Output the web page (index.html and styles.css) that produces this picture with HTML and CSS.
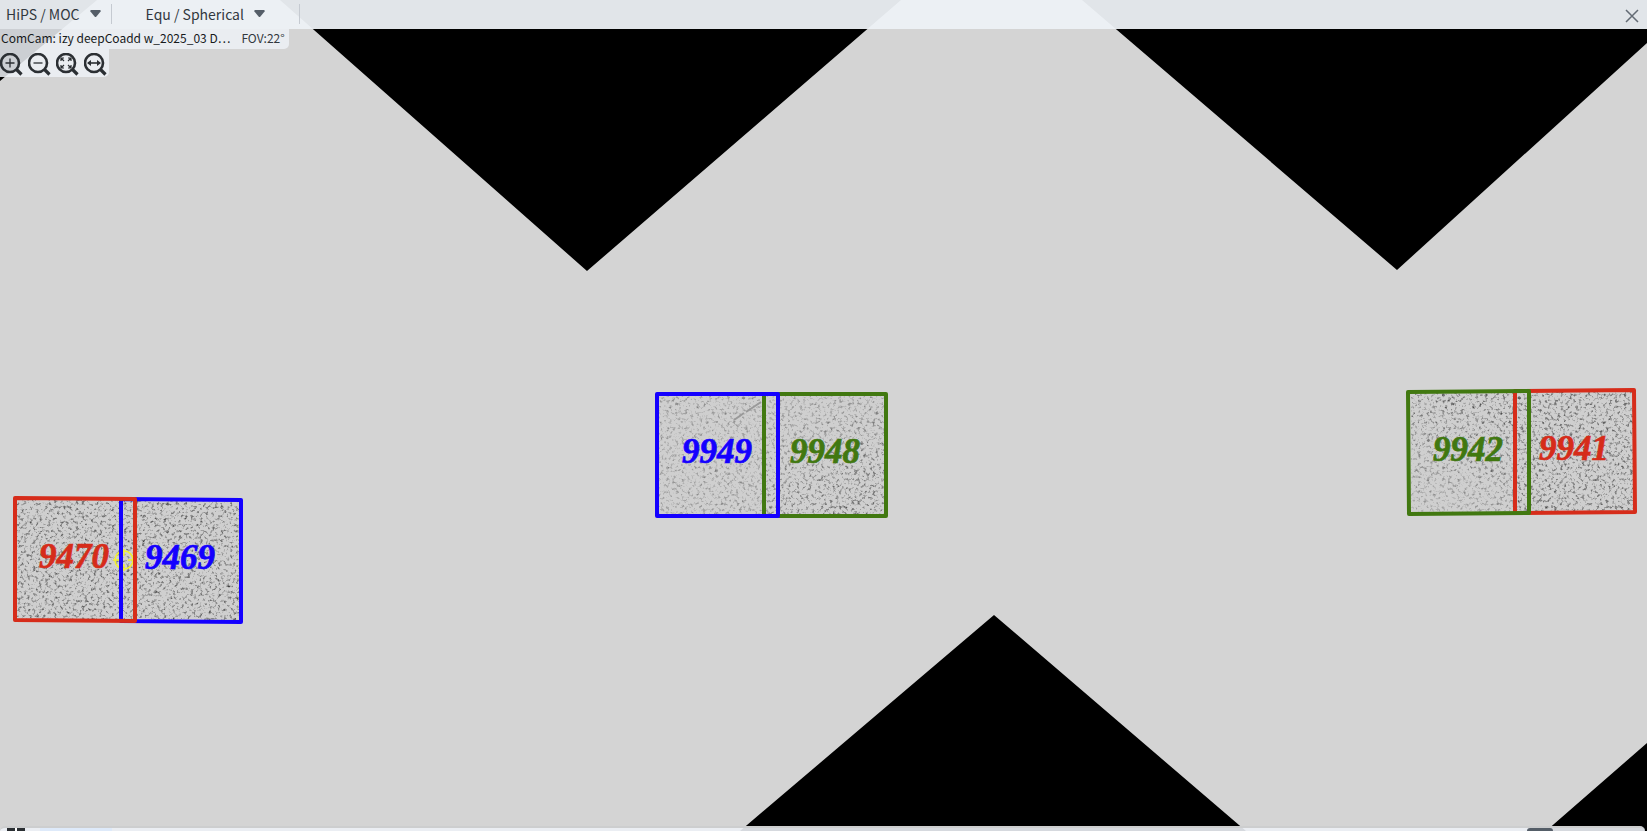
FILE: index.html
```html
<!DOCTYPE html>
<html lang="en">
<head>
<meta charset="utf-8">
<title>HiPS Viewer</title>
<link rel="stylesheet" href="styles.css">
</head>
<body>
<main class="viewer">
  <svg class="sky" viewBox="0 0 1647 831" preserveAspectRatio="xMidYMid slice" role="img" aria-label="Sky map with tracts">
    <defs>
      <filter id="grain" x="0" y="0" width="100%" height="100%" color-interpolation-filters="sRGB">
        <feTurbulence type="fractalNoise" baseFrequency="0.33" numOctaves="3" seed="7"/>
        <feColorMatrix values="0 0 0 0 0.25  0 0 0 0 0.25  0 0 0 0 0.25  2.6 0 0 0 -1.35"/>
        <feGaussianBlur stdDeviation="0.4"/>
      </filter>
      <linearGradient id="fadeDown" x1="0" y1="0" x2="0.5" y2="1"><stop offset="0" stop-color="#666"/><stop offset="1" stop-color="#fff"/></linearGradient>
      <linearGradient id="fadeUp" x1="0.5" y1="0" x2="0.2" y2="1"><stop offset="0" stop-color="#fff"/><stop offset="1" stop-color="#777"/></linearGradient>
      <mask id="maskDown"><rect x="764" y="394" width="122" height="122" fill="url(#fadeDown)"/></mask>
      <mask id="maskUp"><rect x="1409" y="391" width="110" height="122" fill="url(#fadeUp)"/></mask>
    </defs>
    <rect class="sky-base" width="1647" height="831"/>
    <path class="void" d="M0 0H97L0 81ZM280 0H901L587 271ZM1082 0H1647V43L1397 270ZM740 831L994 615L1246 831ZM1546 831L1647 743V831Z"/>

    <g class="tiles">
      <rect x="16" y="499" width="225" height="122"/>
      <rect x="657" y="394" width="229" height="122"/>
      <rect x="1410" y="391" width="225" height="122"/>
    </g>
    <g class="grain">
      <rect x="17" y="500" width="223" height="120"/>
      <rect class="grain-faint" x="658" y="395" width="108" height="120"/>
      <g mask="url(#maskDown)"><rect x="766" y="395" width="119" height="120"/></g>
      <g mask="url(#maskUp)"><rect x="1411" y="392" width="107" height="120"/></g>
      <rect x="1518" y="392" width="116" height="120"/>
    </g>
    <path class="streak" d="M746 412L761 402M734 420L744 413"/>

    <g class="target"><circle cx="124" cy="560" r="9"/><path d="M124 549V556M124 564V571M113 560H120M128 560H134"/></g>

    <g class="tract">
      <path class="blue" d="M121 499L241 500V622L121 621Z"/>
      <path class="red" d="M15 498L135 499V621L15 620Z"/>
      <path class="green" d="M764 394H886V516H764Z"/>
      <path class="blue" d="M657 394H778V516H657Z"/>
      <path class="red" d="M1515 391L1634 390L1635 512L1515 513Z"/>
      <path class="green" d="M1408 392L1529 391V513L1409 514Z"/>
    </g>
    <g class="label">
      <text class="red-text" x="39" y="568">9470</text>
      <text class="blue-text" x="145" y="569">9469</text>
      <text class="blue-text" x="682" y="463">9949</text>
      <text class="green-text" x="790" y="463">9948</text>
      <text class="green-text" x="1433" y="461">9942</text>
      <text class="red-text" x="1539" y="460">9941</text>
    </g>
  </svg>

  <div class="overlay">
    <header class="titlebar">
      <button class="menu" type="button">HiPS / MOC<svg class="caret" viewBox="0 0 11 7"><path d="M1 0H10L11 1L6 7H5L0 1Z"/></svg></button>
      <span class="divider"></span>
      <button class="menu" type="button">Equ / Spherical<svg class="caret" viewBox="0 0 11 7"><path d="M1 0H10L11 1L6 7H5L0 1Z"/></svg></button>
      <span class="divider divider-end"></span>
      <button class="close" type="button" aria-label="Close"><svg viewBox="0 0 14 14"><path d="M1 1L13 13M13 1L1 13"/></svg></button>
    </header>
    <div class="info"><span class="info-name">ComCam: izy deepCoadd w_2025_03 D…</span><span class="info-fov">FOV:22°</span></div>
    <div class="tools">
      <button type="button" aria-label="Zoom in"><svg viewBox="0 0 24 24"><circle cx="10" cy="10" r="9"/><path class="handle" d="M16.500 16.500L21.500 21.500"/><path class="thin" d="M10 5.500V14.500M5.500 10H14.500"/></svg></button>
      <button type="button" aria-label="Zoom out"><svg viewBox="0 0 24 24"><circle cx="10" cy="10" r="9"/><path class="handle" d="M16.500 16.500L21.500 21.500"/><path class="thin" d="M5.500 10H14.500"/></svg></button>
      <button type="button" aria-label="Zoom to fit"><svg viewBox="0 0 24 24"><circle cx="10" cy="10" r="9"/><path class="handle" d="M16.500 16.500L21.500 21.500"/><path class="corner" d="M5 8V5H8M12 5H15V8M15 12V15H12M8 15H5V12M5 5L8 8M15 5L12 8M15 15L12 12M5 15L8 12"/></svg></button>
      <button type="button" aria-label="Zoom to fill"><svg viewBox="0 0 24 24"><circle cx="10" cy="10" r="9"/><path class="handle" d="M16.500 16.500L21.500 21.500"/><path class="mid" d="M4 10H16"/><path class="solid" d="M3 10L7 7V13ZM17 10L13 7V13Z"/></svg></button>
    </div>
    <footer class="readout"><span class="readout-icon"></span><span class="readout-field"></span><span class="readout-toggle"></span></footer>
  </div>
</main>
</body>
</html>
```

FILE: styles.css
```css
* { box-sizing: border-box; }
body { margin: 0; font-family: "Noto Sans CJK SC", "Noto Sans", sans-serif; color: #32383e; }
button { margin: 0; padding: 0; border: 0; background: none; font: inherit; color: inherit; cursor: pointer; }

.viewer { display: grid; grid-template: minmax(0, 1fr) / minmax(0, 1fr); height: 100vh; overflow: hidden; background: #d4d4d4; }
.sky, .overlay { grid-area: 1 / 1; }
.sky { display: block; width: 100%; height: 100%; }
.overlay { position: relative; display: flex; flex-direction: column; align-items: flex-start; }

.sky-base { fill: #d4d4d4; }
.void { fill: #000; }
.tiles { fill: #cfcfcf; }
.grain rect { filter: url(#grain); }
.grain .grain-faint { opacity: 0.55; }
.streak { stroke: #999; stroke-width: 2; }
.tract { fill: none; stroke-width: 4; stroke-linejoin: round; }
.red { stroke: #d62c1a; }
.blue { stroke: #1400ff; }
.green { stroke: #417810; }
.label { font: italic bold 35px "Liberation Serif", serif; stroke-width: 0.7; }
.red-text { fill: #d62c1a; stroke: #d62c1a; }
.blue-text { fill: #1400ff; stroke: #1400ff; }
.green-text { fill: #417810; stroke: #417810; }
.target { fill: none; stroke: #f2f032; stroke-width: 1.5; }

.titlebar { display: flex; align-items: center; align-self: stretch; height: 29px; padding: 0 8px 2px 6px; background: rgba(237, 241, 246, 0.95); font-size: 14px; line-height: 20px; }
.menu { display: flex; align-items: center; gap: 10px; }
.caret { width: 11px; height: 7px; fill: #555e68; }
.divider { width: 1px; height: 20px; margin: 0 34px 0 10px; background: #c5cad1; }
.divider-end { margin-left: 34px; }
.close { display: flex; margin-left: auto; padding-top: 4px; }
.close svg { width: 14px; height: 14px; fill: none; stroke: #636b74; stroke-width: 1.5; }

.info { display: flex; gap: 11px; height: 20px; padding: 0 4px 0 1px; border-radius: 0 0 5px 0; background: rgba(237, 241, 246, 0.86); font-size: 12px; line-height: 18px; }
.info-name { color: #171a1c; }

.tools { display: flex; gap: 4px; height: 28px; padding: 4px 1px 0 0; border-radius: 0 0 5px 0; background: rgba(237, 241, 246, 0.86); }
.tools button { width: 24px; height: 24px; }
.tools svg { display: block; width: 24px; height: 24px; fill: none; stroke: #2b2f33; stroke-width: 2.6; }
.tools .handle { stroke-width: 3.2; }
.tools .thin { stroke-width: 1.3; }
.tools .mid { stroke-width: 1.6; }
.tools .corner { stroke-width: 1.2; }
.tools .solid { fill: #2b2f33; stroke: none; }

.readout { display: flex; align-items: flex-end; align-self: stretch; height: 5px; margin-top: auto; margin-right: 2px; padding: 0 92px 0 7px; border-top: 2px solid #cdcecf; border-radius: 5px 5px 0 0; background: rgba(237, 241, 246, 0.9); }
.readout-icon { width: 18px; height: 3px; background: linear-gradient(90deg, #2b2f33 8px, #fff 8px, #fff 10px, #2b2f33 10px); }
.readout-field { width: 72px; height: 3px; margin-left: 15px; background: #deeafa; }
.readout-toggle { width: 26px; height: 3px; margin-left: auto; border-radius: 8px 8px 0 0; background: #555e68; }
```
